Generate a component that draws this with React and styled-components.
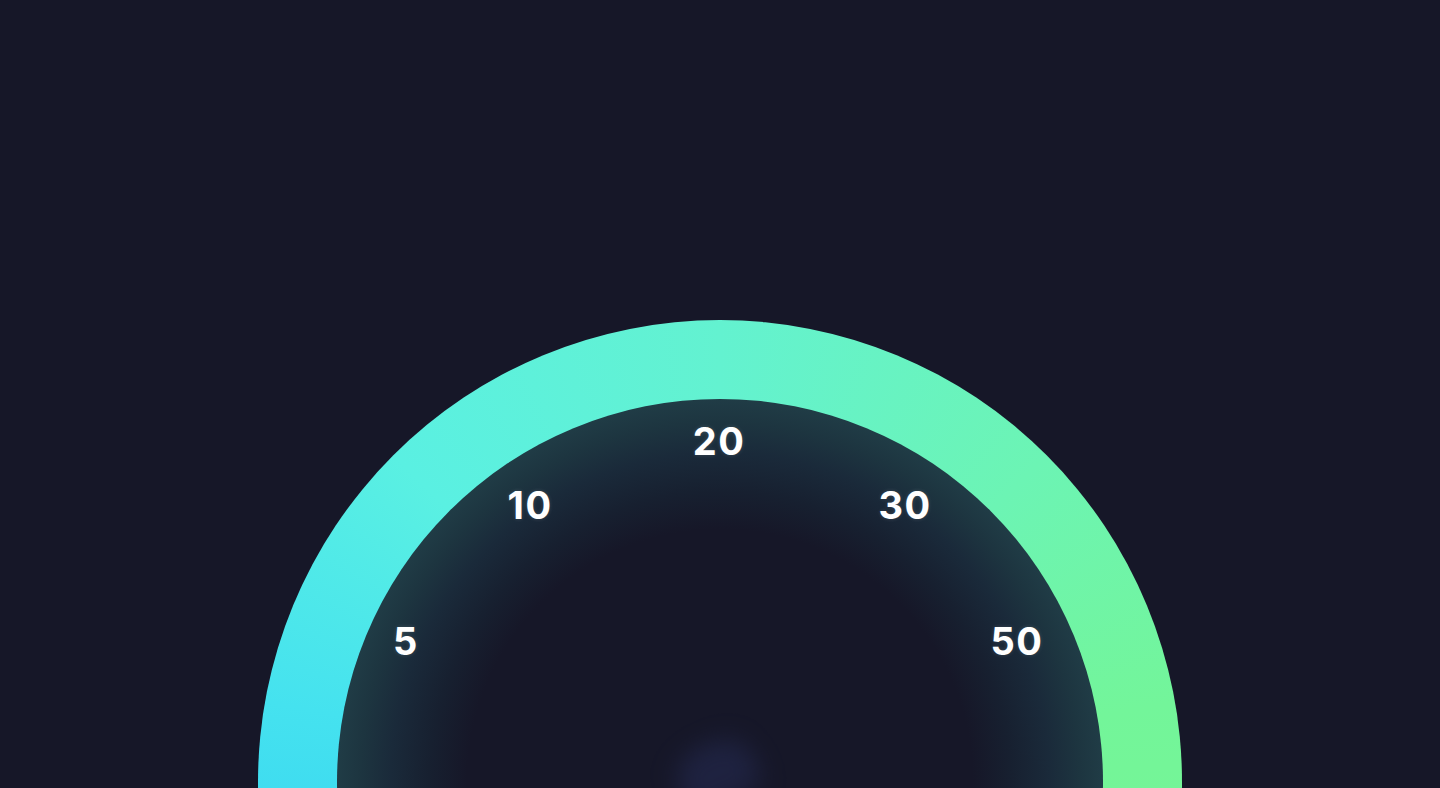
import React from "react";
import styled, { createGlobalStyle } from "styled-components";

const GlobalStyle = createGlobalStyle`
  html, body {
    margin: 0;
    padding: 0;
    background: #161728;
    overflow: hidden;
  }
`;

const Screen = styled.div`
  width: 100vw;
  height: 100vh;
  background: #161728;
  display: flex;
  justify-content: center;
  padding-top: 320px;
  box-sizing: border-box;
  overflow: hidden;
  font-family: "Inter", "Liberation Sans", sans-serif;
`;

const Dial = styled.div`
  position: relative;
  flex: none;
  width: 924px;
  height: 924px;
  border-radius: 50%;
  background: conic-gradient(
    from 180deg at 50% 50%,
    #2cc8f2 0deg,
    #30cff2 60deg,
    #45e2ef 100deg,
    #5af0e2 135deg,
    #63f2d0 180deg,
    #6cf4b4 225deg,
    #73f59a 260deg,
    #78f590 300deg,
    #2cc8f2 360deg
  );
  padding: 79px;
  box-sizing: border-box;
`;

const Face = styled.div`
  position: relative;
  width: 100%;
  height: 100%;
  border-radius: 50%;
  background: radial-gradient(
    circle closest-side at 50% 50%,
    #161728 0%,
    #161728 66%,
    #172030 76%,
    #1a2a3a 86%,
    #1d3540 94%,
    #203c46 100%
  );
`;

const Hub = styled.div`
  position: absolute;
  left: 50%;
  top: 50%;
  width: 80px;
  height: 60px;
  transform: translate(-55%, -65%) rotate(-25deg);
  background: #22274a;
  border-radius: 45% 45% 20% 20%;
  filter: blur(12px);
  opacity: 0.7;
`;

const Mark = styled.span`
  position: absolute;
  left: ${(p) => p.$x}px;
  top: ${(p) => p.$y}px;
  transform: translate(-50%, -50%);
  color: #ffffff;
  font-size: 38px;
  font-weight: 700;
  letter-spacing: 1.5px;
  line-height: 1;
  text-shadow: 0 0 4px rgba(255, 255, 255, 0.15);
`;

// label centres, page coords minus face origin (337, 399)
const marks = [
  { label: "5", x: 406, y: 641 },
  { label: "10", x: 530, y: 505 },
  { label: "20", x: 719, y: 441 },
  { label: "30", x: 905, y: 505 },
  { label: "50", x: 1017, y: 641 },
];

export default function App() {
  return (
    <>
      <GlobalStyle />
      <Screen>
        <Dial>
          <Face>
            <Hub />
            {marks.map((m) => (
              <Mark key={m.label} $x={m.x - 337} $y={m.y - 399}>
                {m.label}
              </Mark>
            ))}
          </Face>
        </Dial>
      </Screen>
    </>
  );
}
